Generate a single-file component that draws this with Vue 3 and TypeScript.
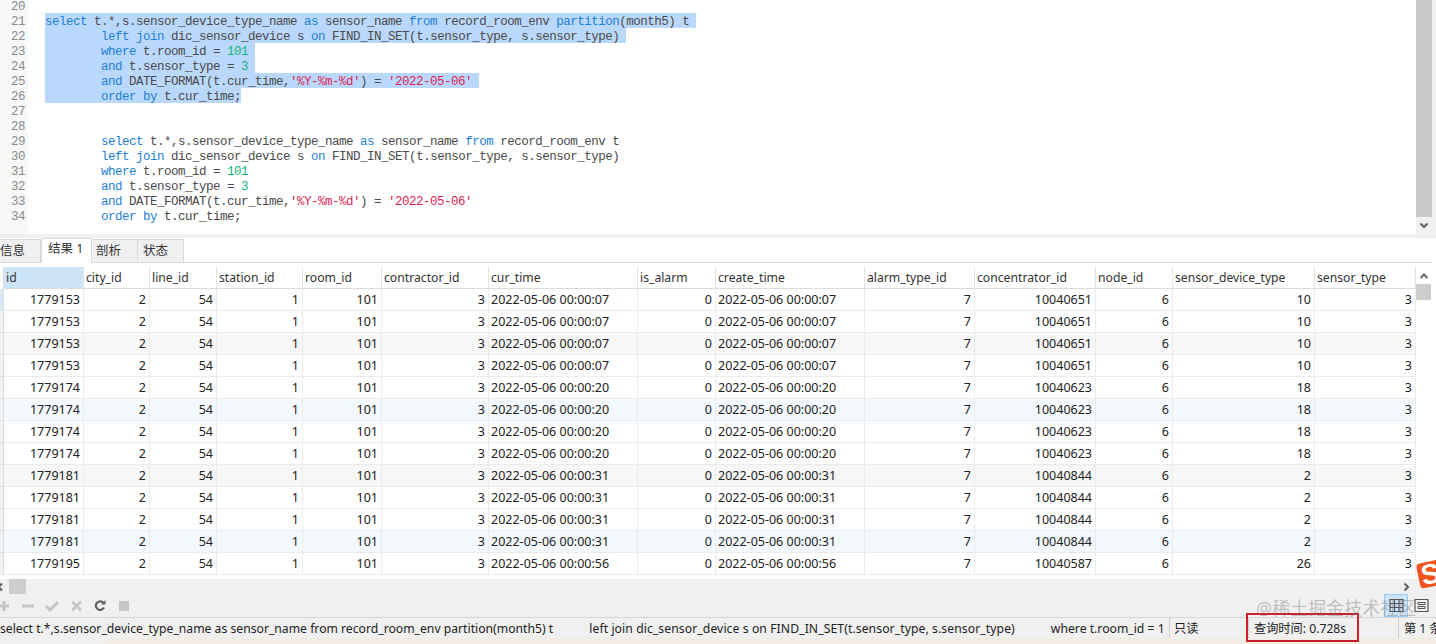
<script setup lang="ts">
type Tok = { t: string; c?: string };
const kw = (t: string): Tok => ({ t, c: 'kw' });
const nu = (t: string): Tok => ({ t, c: 'nu' });
const st = (t: string): Tok => ({ t, c: 'st' });
const p = (t: string): Tok => ({ t });

const ind = '        ';
const leftJoin: Tok[] = [kw('left'), p(' '), kw('join'), p(' dic_sensor_device s '), kw('on'), p(' FIND_IN_SET(t.sensor_type, s.sensor_type)')];
const where: Tok[] = [kw('where'), p(' t.room_id = '), nu('101')];
const andT: Tok[] = [kw('and'), p(' t.sensor_type = '), nu('3')];
const andD: Tok[] = [kw('and'), p(' DATE_FORMAT(t.cur_time,'), st("'%Y-%m-%d'"), p(') = '), st("'2022-05-06'")];
const order: Tok[] = [kw('order'), p(' '), kw('by'), p(' t.cur_time;')];

const lines: { n: number; toks: Tok[]; sel?: boolean; nl?: boolean }[] = [
  { n: 20, toks: [] },
  { n: 21, sel: true, nl: true, toks: [kw('select'), p(' t.*,s.sensor_device_type_name '), kw('as'), p(' sensor_name '), kw('from'), p(' record_room_env '), kw('partition'), p('(month5) t')] },
  { n: 22, sel: true, nl: true, toks: [p(ind), ...leftJoin] },
  { n: 23, sel: true, nl: true, toks: [p(ind), ...where] },
  { n: 24, sel: true, nl: true, toks: [p(ind), ...andT] },
  { n: 25, sel: true, nl: true, toks: [p(ind), ...andD] },
  { n: 26, sel: true, toks: [p(ind), ...order] },
  { n: 27, toks: [] },
  { n: 28, toks: [] },
  { n: 29, toks: [p(ind), kw('select'), p(' t.*,s.sensor_device_type_name '), kw('as'), p(' sensor_name '), kw('from'), p(' record_room_env t')] },
  { n: 30, toks: [p(ind), ...leftJoin] },
  { n: 31, toks: [p(ind), ...where] },
  { n: 32, toks: [p(ind), ...andT] },
  { n: 33, toks: [p(ind), ...andD] },
  { n: 34, toks: [p(ind), ...order] },
];

const columns = [
  { name: 'id', w: 80 }, { name: 'city_id', w: 66 }, { name: 'line_id', w: 67 }, { name: 'station_id', w: 86 },
  { name: 'room_id', w: 79 }, { name: 'contractor_id', w: 107 }, { name: 'cur_time', w: 149 }, { name: 'is_alarm', w: 78 },
  { name: 'create_time', w: 149 }, { name: 'alarm_type_id', w: 110 }, { name: 'concentrator_id', w: 121 }, { name: 'node_id', w: 77 },
  { name: 'sensor_device_type', w: 142 }, { name: 'sensor_type', w: 101 },
];
const textCols = new Set([6, 8]);

const seeds: [string, string, string, string, string][] = [
  ['1779153', '00:00:07', '10040651', '10', ''],
  ['1779153', '00:00:07', '10040651', '10', ''],
  ['1779153', '00:00:07', '10040651', '10', 'grey'],
  ['1779153', '00:00:07', '10040651', '10', ''],
  ['1779174', '00:00:20', '10040623', '18', ''],
  ['1779174', '00:00:20', '10040623', '18', 'blue'],
  ['1779174', '00:00:20', '10040623', '18', ''],
  ['1779174', '00:00:20', '10040623', '18', ''],
  ['1779181', '00:00:31', '10040844', '2', 'grey'],
  ['1779181', '00:00:31', '10040844', '2', ''],
  ['1779181', '00:00:31', '10040844', '2', ''],
  ['1779181', '00:00:31', '10040844', '2', 'blue'],
  ['1779195', '00:00:56', '10040587', '26', ''],
];
const rows = seeds.map(([id, time, conc, dev, tone]) => ({
  tone,
  cells: [id, '2', '54', '1', '101', '3', `2022-05-06 ${time}`, '0', `2022-05-06 ${time}`, '7', conc, '6', dev, '3'],
}));
const tabs = ['信息', '结果 1', '剖析', '状态'];
const tableW = columns.reduce((a, c) => a + c.w, 0) + 1;
</script>

<template>
  <div class="app">
    <section class="editor">
      <div class="gutter">
        <div v-for="l in lines" :key="l.n" class="ln">{{ l.n }}</div>
      </div>
      <div class="code">
        <div v-for="l in lines" :key="l.n" class="line"><span :class="{ sel: l.sel }"><span v-for="(k, i) in l.toks" :key="i" :class="k.c">{{ k.t }}</span><template v-if="l.nl">&#160;</template></span></div>
      </div>
      <div class="vbar">
        <div class="vtrack"></div>
        <div class="vbtn">
          <svg width="10" height="8" viewBox="0 0 10 8"><path d="M1.5 1.5 5 5l3.5-3.500" fill="none" stroke="#5c5c5c" stroke-width="2" /></svg>
        </div>
      </div>
    </section>

    <div class="band"></div>

    <nav class="tabs">
      <div v-for="(t, i) in tabs" :key="t" class="tab" :class="['t' + i, { active: i === 1 }]">{{ t }}</div>
    </nav>

    <section class="results">
      <div class="selector">
        <div class="sel-h"></div>
        <div v-for="(r, i) in rows" :key="i" class="sel-c" :class="{ cur: i === 0 }"></div>
      </div>
      <table class="grid" :style="{ width: tableW + 'px' }">
        <colgroup>
          <col v-for="c in columns" :key="c.name" :style="{ width: c.w + 'px' }" />
        </colgroup>
        <thead>
          <tr>
            <th v-for="(c, i) in columns" :key="c.name" :class="{ first: i === 0 }">{{ c.name }}</th>
          </tr>
        </thead>
        <tbody>
          <tr v-for="(r, ri) in rows" :key="ri" :class="r.tone">
            <td v-for="(v, ci) in r.cells" :key="ci" :class="{ txt: textCols.has(ci) }">{{ v }}</td>
          </tr>
        </tbody>
      </table>
      <div class="rbar">
        <div class="rbtn">
          <svg width="10" height="8" viewBox="0 0 10 8"><path d="M1.5 6 5 2.5 8.5 6" fill="none" stroke="#6a6a6a" stroke-width="2" /></svg>
        </div>
        <div class="rthumb"></div>
      </div>
    </section>

    <section class="bottom">
      <div class="hbar">
        <svg class="hleft" width="5" height="10" viewBox="0 0 5 10"><path d="M4 1.5 .5 5 4 8.5" fill="none" stroke="#5c5c5c" stroke-width="2" /></svg>
        <div class="hthumb"></div>
        <div class="hspace"></div>
        <svg class="hright" width="8" height="10" viewBox="0 0 8 10"><path d="M1.5 1.5 5 5 1.5 8.5" fill="none" stroke="#5c5c5c" stroke-width="2" /></svg>
      </div>
      <div class="toolbar">
        <div class="tools">
          <span class="tool"><svg width="12" height="12" viewBox="0 0 12 12"><path d="M6 1v10M1 6h10" stroke="#c6c6c6" stroke-width="3" /></svg></span>
          <span class="tool"><svg width="12" height="12" viewBox="0 0 12 12"><path d="M0 6h12" stroke="#c6c6c6" stroke-width="3" /></svg></span>
          <span class="tool"><svg width="14" height="12" viewBox="0 0 14 12"><path d="m1 6 4 4 8-8" fill="none" stroke="#c6c6c6" stroke-width="3" /></svg></span>
          <span class="tool"><svg width="11" height="12" viewBox="0 0 11 12"><path d="m1 1.500 9 9M10 1.500l-9 9" stroke="#c6c6c6" stroke-width="2.600" /></svg></span>
          <span class="tool"><svg width="12" height="12" viewBox="0 0 12 12"><path d="M10 7.500A4.300 4.300 0 1 1 9.500 3" fill="none" stroke="#626262" stroke-width="2.200" /><path d="M7 4.500h4.500V0z" fill="#626262" /></svg></span>
          <span class="tool"><svg width="10" height="10" viewBox="0 0 10 10"><rect width="10" height="10" fill="#c6c6c6" /></svg></span>
        </div>
        <div class="views">
          <div class="view on">
            <svg width="15" height="15" viewBox="0 0 15 15"><path d="M1 1.500h13v12H1zM1 5.500h13M1 9.500h13M5.500 1.500v12M10 1.500v12" fill="none" stroke="#555" stroke-width="1.200" /></svg>
          </div>
          <div class="view">
            <svg width="15" height="15" viewBox="0 0 15 15"><path d="M1 1.500h13v12H1z" fill="none" stroke="#555" stroke-width="1.200" /><path d="M4 4.500h7v2H4zM4 8.500h7v2H4z" fill="none" stroke="#555" /></svg>
          </div>
        </div>
      </div>
      <footer class="status">
        <div class="s-sql"><span>select t.*,s.sensor_device_type_name as sensor_name from record_room_env partition(month5) t</span><span class="second">left join dic_sensor_device s on FIND_IN_SET(t.sensor_type, s.sensor_type)</span><span>where t.room_id = 1</span></div>
        <div class="s-ro">只读</div>
        <div class="s-time">查询时间: 0.728s</div>
        <div class="s-page">第 1 条</div>
      </footer>
      <div class="foot"></div>
      <div class="redbox"></div>
      <div class="mark">@稀土掘金技术社区</div>
      <div class="logo"><span>S</span></div>
    </section>
  </div>
</template>

<style>
html, body { margin: 0; background: #fff; overflow: hidden; }
</style>

<style scoped>
.app {
  width: 1436px;
  height: 644px;
  display: flex;
  flex-direction: column;
  overflow: hidden;
  background: #fff;
  font-family: "Noto Sans", "Noto Sans CJK SC", sans-serif;
  color: #222;
}
.editor { height: 234px; display: flex; overflow: hidden; background: #fff; flex: none; }
.gutter { width: 28px; flex: none; background: #f8f8f8; color: #8a8a8a; overflow: hidden; }
.gutter, .code { font: 12.5px/18px "Liberation Mono", monospace; letter-spacing: -.5px; }
.ln { height: 15px; padding-left: 11px; position: relative; top: -2px; }
.code { flex: 1; padding-left: 17px; color: #4a4a4a; overflow: hidden; }
.line { height: 15px; white-space: pre; position: relative; top: -2px; }
.sel { background: #bad8fb; display: inline-block; height: 15px; vertical-align: top; }
.kw { color: #1c80d8; }
.nu { color: #10b67c; }
.st { color: #dd1f55; }
.vbar { width: 20px; flex: none; background: #f1f1f1; display: flex; flex-direction: column; padding-right: 4px; box-sizing: border-box; }
.vtrack { flex: 1; background: #c9c9c9; }
.vbtn { height: 17px; display: flex; align-items: center; justify-content: center; }
.band { height: 4px; background: #f0f0f0; flex: none; }

.tabs { height: 24px; display: flex; align-items: flex-end; background: #fff; border-bottom: 1px solid #d9d9d9; flex: none; margin-right: 4px; box-sizing: content-box; font-size: 12.5px; }
.tab { height: 23px; box-sizing: border-box; background: #f0f0f0; border: 1px solid #d9d9d9; border-bottom: 0; border-left: 0; display: flex; align-items: center; padding-left: 4px; line-height: 1; color: #333; }
.t0 { width: 41px; padding-left: 0; }
.t1 { width: 51px; }
.t2 { width: 46px; }
.t3 { width: 46px; padding-left: 5px; }
.tab.active { height: 25px; background: #fff; border-left: 1px solid #d9d9d9; margin-bottom: -1px; padding-left: 6px; padding-bottom: 3px; position: relative; }

.results { display: flex; height: 316px; padding-top: 4px; box-sizing: border-box; background: #fff; flex: none; margin-right: 4px; }
.selector { width: 3px; flex: none; }
.sel-h { height: 22px; }
.sel-c { height: 22px; box-sizing: border-box; background: #f2f2f2; border-bottom: 1px solid #dfdfdf; }
.sel-c.cur { background: #d5e6f6; }
.grid { border-collapse: separate; border-spacing: 0; table-layout: fixed; font-size: 12.5px; align-self: flex-start; flex: none; border-left: 1px solid #dcdcdc; }
.grid th { height: 21px; padding: 0 0 0 2px; font-size: 12.2px; font-weight: 400; text-align: left; color: #333; background: #fff; border-right: 1px solid #e4e4e4; border-bottom: 1px solid #dcdcdc; white-space: nowrap; overflow: hidden; }
.grid th.first { background: #cce4f7; }
.grid td { height: 19px; padding: 2px 3px 0 0; text-align: right; border-right: 1px solid #ebebeb; border-bottom: 1px solid #ebebeb; white-space: nowrap; overflow: hidden; background: #fff; line-height: 1; }
.grid td.txt { text-align: left; padding: 2px 0 0 2px; }
.grid tr.grey td { background: #f7f7f7; }
.grid tr.blue td { background: #f4f9fd; }
.rbar { width: 16px; flex: none; background: #fff; }
.rbtn { height: 17px; display: flex; align-items: center; justify-content: center; }
.rthumb { height: 16px; background: #cdcdcd; margin-right: 1px; }

.bottom { flex: 1; background: #f0f0f0; display: flex; flex-direction: column; position: relative; min-height: 0; }
.hbar { height: 15px; display: flex; align-items: center; flex: none; }
.hleft { width: 5px; margin-left: -2px; }
.hthumb { width: 17px; height: 15px; margin-left: 6px; background: #cdcdcd; }
.hspace { flex: 1; }
.hright { margin-right: 25px; }
.toolbar { height: 23px; display: flex; align-items: center; justify-content: space-between; flex: none; border-bottom: 1px solid #d6d6d6; }
.tools { display: flex; align-items: center; margin-left: -8px; }
.tool { width: 24px; height: 12px; display: flex; align-items: center; justify-content: center; }
.views { display: flex; margin-right: 3px; gap: 1px; height: 23px; }
.view { width: 24px; height: 23px; box-sizing: border-box; display: flex; align-items: center; justify-content: center; }
.view.on { background: #cce4f7; border: 1px solid #9bcdf2; }
.status { height: 20px; display: flex; align-items: center; font-size: 12.2px; flex: none; white-space: nowrap; }
.s-sql { width: 1169px; overflow: hidden; display: flex; gap: 36px; flex: none; border-right: 1px solid #cfcfcf; height: 20px; align-items: center; }
.s-sql span { flex: none; }
.second { letter-spacing: .08px; }
.s-ro { width: 78px; padding-left: 4px; box-sizing: border-box; flex: none; height: 20px; display: flex; align-items: center; }
.s-time { width: 150px; padding-left: 5px; box-sizing: border-box; flex: none; border-left: 1px solid #cfcfcf; height: 20px; display: flex; align-items: center; }
.s-page { flex: 1; padding-left: 5px; border-left: 1px solid #cfcfcf; height: 20px; display: flex; align-items: center; overflow: hidden; }
.foot { flex: 1; background: linear-gradient(90deg, #f1f0ef 0, #f1f0ef 105px, #f3ece5 106px, #f3ece5 100%); }
.redbox { position: absolute; left: 1246px; top: 34px; width: 113px; height: 29px; box-sizing: border-box; border: 2px solid #cf1f2c; }
.mark { position: absolute; left: 1256px; top: 15px; font-size: 18px; line-height: 28px; color: rgba(120, 120, 120, .42); white-space: nowrap; }
.logo { position: absolute; left: 1418px; top: -18px; width: 30px; height: 25px; border-radius: 4px; background: #f2521e; transform: rotate(-12deg); display: flex; align-items: center; padding-left: 3px; box-sizing: border-box; overflow: hidden; }
.logo span { color: #fff; font: 700 28px/25px "Liberation Sans", sans-serif; }
</style>
